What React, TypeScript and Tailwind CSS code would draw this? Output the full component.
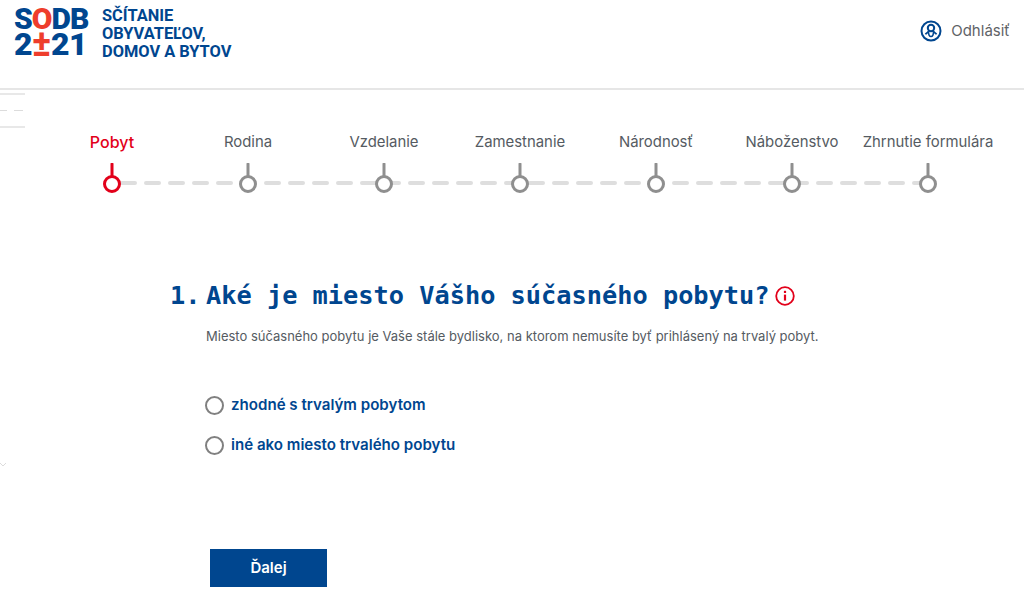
import React from "react";

const steps = ["Pobyt", "Rodina", "Vzdelanie", "Zamestnanie", "Národnosť", "Náboženstvo", "Zhrnutie formulára"];

const StepPin = ({ active }: { active: boolean }) => {
  const color = active ? "#e2001a" : "#8f8f8f";
  return (
    <svg width="136" height="32" viewBox="0 0 136 32" className="block">
      <line x1="68" y1="1" x2="68" y2="13" stroke={color} strokeWidth="3" strokeLinecap="round" />
      <circle cx="68" cy="21" r="7.5" fill="#fff" stroke={color} strokeWidth="3" />
    </svg>
  );
};

const Stepper = () => (
  <div className="relative ml-[44px] mt-[40px] w-[952px]">
    {/* dashed rail runs behind the pins */}
    <svg width="816" height="4" viewBox="0 0 816 4" className="absolute left-[68px] top-[51px]">
      <line x1="10" y1="2" x2="816" y2="2" stroke="#dedede" strokeWidth="4" strokeLinecap="round" strokeDasharray="13 11" />
    </svg>
    <ol className="relative grid grid-cols-7">
      {steps.map((s, i) => (
        <li key={s} className="flex w-[136px] flex-col items-center">
          <span
            className={`h-[24px] whitespace-nowrap leading-[24px] ${
              i === 0 ? "text-[16px] font-medium text-[#e2001a]" : "text-[14.9px] text-[#555b62]"
            }`}
          >
            {s}
          </span>
          <div className="mt-[9px]">
            <StepPin active={i === 0} />
          </div>
        </li>
      ))}
    </ol>
  </div>
);

const Radio = ({ label }: { label: string }) => (
  <label className="flex h-[20px] items-center gap-[7px]">
    <span className="h-[19px] w-[19px] rounded-full border-2 border-[#808080] bg-white" />
    <span className="text-[15.1px] font-semibold text-[#00468f]">{label}</span>
  </label>
);

export default function App() {
  return (
    <div className="relative h-[604px] w-[1024px] overflow-hidden bg-white font-['Inter',sans-serif]">
      <header className="flex h-[90px] items-start justify-between border-b-2 border-[#e6e6e6] pl-[14px] pr-[14px]">
        <div className="flex pt-[6px]">
          <div className="w-[88px] font-['Roboto',sans-serif] font-black text-[#00468f]">
            <div className="text-[30px] leading-[25px] tracking-[-1px]">
              S<span className="text-[#ee3e2c]">O</span>DB
            </div>
            <div className="flex h-[27px] items-center text-[32px] leading-[27px] tracking-[-0.5px]">
              2<span className="text-[36px] font-bold text-[#ee3e2c]">±</span>21
            </div>
          </div>
          <div className="pt-[1px] font-['Roboto',sans-serif] text-[16.4px] font-bold leading-[18px] text-[#00468f]">
            <div>SČÍTANIE</div>
            <div>OBYVATEĽOV,</div>
            <div>DOMOV A BYTOV</div>
          </div>
        </div>
        <div className="flex items-center gap-[9px] pt-[20px]">
          <svg width="22" height="22" viewBox="0 0 22 22" fill="none" stroke="#00468f" strokeWidth="2">
            <circle cx="11" cy="11" r="9.5" />
            <circle cx="11" cy="8" r="3.2" />
            <path d="M8.5 11c-.5 1.5-2 2.2-3.2 3.2M13.5 11c.5 1.5 2 2.2 3.2 3.2M8.5 11.5c0 3 1 5 2.5 5s2.5-2 2.5-5" strokeWidth="1.6" />
          </svg>
          <span className="text-[15px] text-[#5f6367]">Odhlásiť</span>
        </div>
      </header>

      {/* stray bits of the hidden sidebar at the left edge */}
      <div className="absolute left-0 top-[93px] h-[2px] w-[25px] bg-[#e8e8e8]" />
      <div className="absolute left-0 top-[110px] h-[1px] w-[7px] bg-[#dcdcdc]" />
      <div className="absolute left-[14px] top-[110px] h-[1px] w-[9px] bg-[#dcdcdc]" />
      <div className="absolute left-0 top-[126px] h-[2px] w-[25px] bg-[#e8e8e8]" />
      <svg width="8" height="6" viewBox="0 0 8 6" className="absolute left-0 top-[462px]" fill="none" stroke="#dcdcdc">
        <path d="M0 1l3 3 3-3" />
      </svg>

      <Stepper />

      <main className="ml-[170px] mt-[84px]">
        <div className="flex items-center font-['DejaVu_Sans_Mono',monospace] text-[25.3px] font-bold leading-[34px] text-[#00468f]">
          <span className="w-[36px]">1.</span>
          <h1>Aké je miesto Vášho súčasného pobytu?</h1>
          <svg width="20" height="20" viewBox="0 0 20 20" fill="none" stroke="#e2001a" strokeWidth="1.8" className="ml-[5px]">
            <circle cx="10" cy="10" r="8.8" />
            <path d="M10 8.6v6" strokeWidth="2.2" />
            <path d="M10 4.8v2.2" strokeWidth="2.2" />
          </svg>
        </div>
        <p className="ml-[36px] mt-[13px] whitespace-nowrap text-[13px] leading-[20px] text-[#555b62]">
          Miesto súčasného pobytu je Vaše stále bydlisko, na ktorom nemusíte byť prihlásený na trvalý pobyt.
        </p>
        <div className="ml-[35px] mt-[49px] flex flex-col gap-[20px]">
          <Radio label="zhodné s trvalým pobytom" />
          <Radio label="iné ako miesto trvalého pobytu" />
        </div>
        <button className="ml-[40px] mt-[94px] h-[38px] w-[117px] bg-[#00468f] text-[15px] font-semibold text-white">
          Ďalej
        </button>
      </main>
    </div>
  );
}
